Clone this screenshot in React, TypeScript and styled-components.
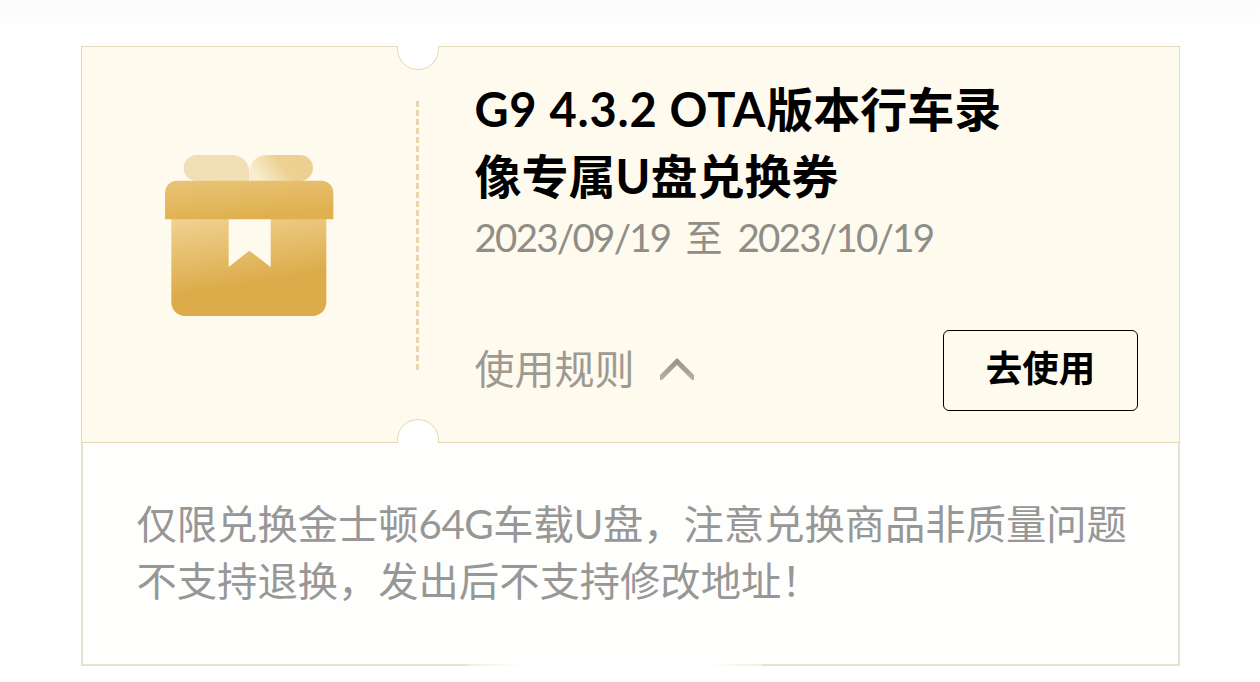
import React, { useState } from 'react';
import styled, { createGlobalStyle } from 'styled-components';

const GlobalStyle = createGlobalStyle`
  *, *::before, *::after {
    box-sizing: border-box;
  }

  body {
    margin: 0;
    background: #fff;
    font-family: 'Noto Sans CJK SC', sans-serif;
  }
`;

const Page = styled.main`
  width: 1260px;
  height: 682px;
  padding: 46px 80px 0 81px;
  overflow: hidden;
  background: linear-gradient(#fafafa, #fff 26px);
`;

const Ticket = styled.section`
  position: relative;
  display: flex;
  width: 1099px;
  height: 397px;
  border: 1px solid #e2dabb;
  background: #fffaee;
`;

const Notch = styled.span<{ $side: 'top' | 'bottom' }>`
  position: absolute;
  left: 315px;
  width: 42px;
  height: 24px;
  background: #fff;
  border: 1px solid #e2dabb;
  ${props => props.$side === 'top'
    ? 'top: -1px; border-top: 0; border-radius: 0 0 21px 21px;'
    : 'bottom: -1px; border-bottom: 0; border-radius: 21px 21px 0 0;'}
`;

const Cover = styled.div`
  display: flex;
  justify-content: center;
  width: 334px;
  padding-top: 107px;
`;

const Perforation = styled.div`
  width: 3px;
  height: 270px;
  margin-top: 54px;
  background: repeating-linear-gradient(#e8d5ae 0 6px, transparent 6px 9.07px);
`;

const Details = styled.div`
  display: flex;
  flex: 1;
  flex-direction: column;
  padding: 26px 41px 31px 55.5px;
`;

const Title = styled.h1`
  margin: 0 0 2px;
  color: #000;
  font-size: 47px;
  font-weight: 700;
  line-height: 67px;
  white-space: nowrap;
`;

const Line = styled.span<{ $height: number }>`
  display: block;
  height: ${props => props.$height}px;
`;

const Latin = styled.span<{ $spacing?: number }>`
  font-family: Lato, sans-serif;
  letter-spacing: ${props => props.$spacing ?? 0}px;
`;

const Period = styled.p`
  display: flex;
  align-items: baseline;
  gap: 15px;
  height: 54px;
  margin: 0;
  color: #8f8d87;
  font-size: 37px;
  line-height: 54px;
  white-space: nowrap;
`;

const DateText = styled.span`
  font-family: Lato, sans-serif;
  font-size: 38.5px;
  letter-spacing: -1.75px;
`;

const Actions = styled.div`
  display: flex;
  align-items: center;
  justify-content: space-between;
  height: 81px;
  margin-top: auto;
`;

const RulesToggle = styled.button`
  display: flex;
  align-items: center;
  gap: 24px;
  padding: 0;
  border: 0;
  background: none;
  color: #9c9a92;
  font: 40px/58px 'Noto Sans CJK SC', sans-serif;
`;

const ToggleLabel = styled.span`
  padding-bottom: 8px;
`;

const UseButton = styled.button`
  width: 195px;
  height: 81px;
  padding: 0 0 7px;
  border: 1px solid #000;
  border-radius: 6px;
  background: transparent;
  color: #000;
  font: 700 36.5px/54px 'Noto Sans CJK SC', sans-serif;
`;

const Rules = styled.section`
  width: 1099px;
  height: 223px;
  padding: 50px 0 0 53.5px;
  border: 2px solid #e9e2cb;
  border-top: 0;
  background: #fefefd;
  color: #979797;
  font-size: 40.3px;
  line-height: 57px;
  white-space: nowrap;
`;

const HomeBar = styled.div`
  position: relative;
  width: 296px;
  height: 4px;
  margin: -3px 0 0 386px;
  background: linear-gradient(90deg, rgba(254, 254, 253, 0.4), #fefefd 18%, #fefefd 82%, rgba(254, 254, 253, 0.4));
`;

const GiftIcon = () => (
  <svg width="170" height="163" viewBox="42 42 510 489">
    <defs>
      <linearGradient id="lid" x1="0" y1="0" x2="0.35" y2="1">
        <stop offset="0" stopColor="#e9c477" />
        <stop offset="1" stopColor="#dfb04f" />
      </linearGradient>
      <linearGradient id="box" x1="0.1" y1="0" x2="0.35" y2="1">
        <stop offset="0" stopColor="#f0d190" />
        <stop offset="0.72" stopColor="#dcac4b" />
        <stop offset="1" stopColor="#dcac4b" />
      </linearGradient>
      <linearGradient id="bow" gradientUnits="userSpaceOnUse" x1="325" y1="120" x2="395" y2="70">
        <stop offset="0" stopColor="#faedcf" />
        <stop offset="1" stopColor="#edd192" />
      </linearGradient>
    </defs>
    <path d="M140 45h104c34 0 54 24 54 54v24H140c-22 0-39-17-39-39s17-39 39-39z" fill="#f2dfb5" />
    <path d="M352 45h98c22 0 39 17 39 39s-17 39-39 39H299V99c0-30 19-54 53-54z" fill="url(#bow)" />
    <path d="M64 236h172v145l62-49 64 49V236h167v251c0 23-18 41-41 41H105c-23 0-41-18-41-41z" fill="url(#box)" />
    <path d="M81 122h433c20 0 36 16 36 36v80H45v-80c0-20 16-36 36-36z" fill="url(#lid)" />
  </svg>
);

const Chevron = ({ open }: { open: boolean }) => (
  <svg width="36" height="26" viewBox="0 0 36 26" fill="none" transform={open ? undefined : 'rotate(180)'}>
    <defs>
      <linearGradient id="chevron" x1="0" y1="0" x2="0" y2="1">
        <stop offset="0" stopColor="#918f87" />
        <stop offset="1" stopColor="#b5b2aa" />
      </linearGradient>
    </defs>
    <path d="M18 0L35 17v5h-2L18 7 3 22H1v-5z" fill="url(#chevron)" />
  </svg>
);

const App: React.FC = () => {
  const [open, setOpen] = useState(true);

  return (
    <>
      <GlobalStyle />
      <Page>
        <Ticket>
          <Notch $side="top" />
          <Notch $side="bottom" />
          <Cover>
            <GiftIcon />
          </Cover>
          <Perforation />
          <Details>
            <Title>
              <Line $height={67}><Latin $spacing={0.75}>G9 4.3.2 OTA</Latin>版本行车录</Line>
              <Line $height={67}>像专属<Latin>U</Latin>盘兑换券</Line>
            </Title>
            <Period>
              <DateText>2023/09/19</DateText>
              至
              <DateText>2023/10/19</DateText>
            </Period>
            <Actions>
              <RulesToggle onClick={() => setOpen(!open)}>
                <ToggleLabel>使用规则</ToggleLabel>
                <Chevron open={open} />
              </RulesToggle>
              <UseButton>去使用</UseButton>
            </Actions>
          </Details>
        </Ticket>
        {open && (
          <Rules>
            <Line $height={57}>仅限兑换金士顿<Latin $spacing={-0.5}>64G</Latin>车载<Latin $spacing={-0.5}>U</Latin>盘，注意兑换商品非质量问题</Line>
            <Line $height={57}>不支持退换，发出后不支持修改地址！</Line>
          </Rules>
        )}
        <HomeBar />
      </Page>
    </>
  );
};

export default App;
